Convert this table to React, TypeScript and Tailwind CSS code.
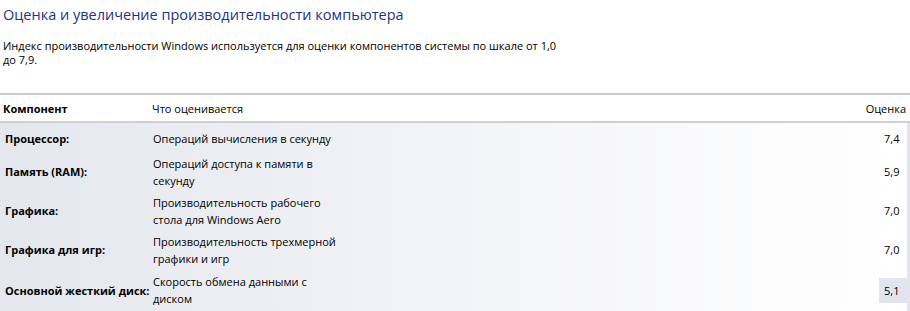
const rows = [
  { name: "Процессор:", what: ["Операций вычисления в секунду"], score: "7,4", h: "h-[27px]" },
  { name: "Память (RAM):", what: ["Операций доступа к памяти в", "секунду"], score: "5,9", h: "h-[39px]" },
  { name: "Графика:", what: ["Производительность рабочего", "стола для Windows Aero"], score: "7,0", h: "h-[39px]" },
  { name: "Графика для игр:", what: ["Производительность трехмерной", "графики и игр"], score: "7,0", h: "h-[39px]" },
  { name: "Основной жесткий диск:", what: ["Скорость обмена данными с", "диском"], score: "5,1", h: "h-[42px]", base: true },
];

export default function App() {
  return (
    <div className="h-[311px] w-[910px] overflow-hidden bg-white font-['Open_Sans','Noto_Sans',sans-serif] text-[11px] leading-[17px] text-black">
      <h1 className="pl-[3px] pt-[4px] text-[14.5px] leading-[22px] text-[#1e3287]">
        Оценка и увеличение производительности компьютера
      </h1>
      <p className="mt-[13px] w-[566px] pl-[3px] leading-[14px]">
        Индекс производительности Windows используется для оценки компонентов системы по шкале от 1,0 до 7,9.
      </p>

      <div className="mt-[26px] w-[910px] border-t-2 border-[#cbcbcb]">
        <div className="flex h-[28px] items-center border-b-2 border-[#d0d0d0] pr-[4px]">
          <div className="w-[150px] pl-[3px] font-bold">Компонент</div>
          <div className="flex-1 pl-[2px]">Что оценивается</div>
          <div className="text-right">Оценка</div>
        </div>

        <div className="flex">
          <div className="flex w-[907px] flex-col bg-gradient-to-r from-[#e4e7ee] via-[#f3f4f7] to-white pt-[2px]">
            {rows.map((r) => (
              <div key={r.name} className={`flex items-center ${r.h}`}>
                <div className="w-[150px] whitespace-nowrap pl-[5px] font-bold">{r.name}</div>
                <div className="flex-1 pl-[3px]">
                  {r.what.map((l) => (
                    <div key={l}>{l}</div>
                  ))}
                </div>
                <div
                  className={`flex h-[25px] w-[28px] items-center pl-[5px] ${
                    r.base ? "bg-[#e2e5f0]" : "bg-white"
                  }`}
                >
                  {r.score}
                </div>
              </div>
            ))}
          </div>
          <div className="w-[3px] bg-[#e2e5f0]" />
        </div>
      </div>
    </div>
  );
}
